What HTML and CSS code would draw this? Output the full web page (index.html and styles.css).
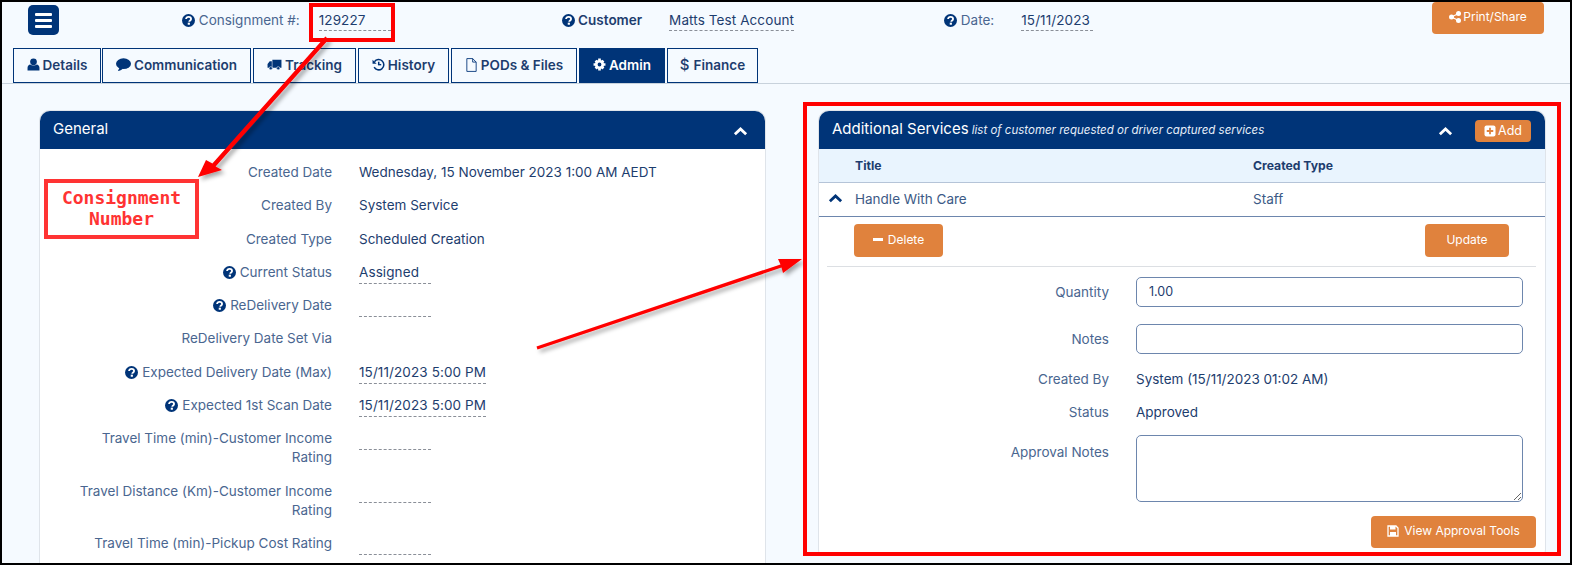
FILE: index.html
```html
<!DOCTYPE html>
<html lang="en">

<head>
    <title>Consignment 129227 - Admin</title>
    <meta charset="UTF-8">
    <meta name="viewport" content="width=device-width, initial-scale=1">

    <link rel="stylesheet" href="styles.css">
</head>

<body>
    <svg class="defs" width="0" height="0">
        <symbol id="i-help" viewBox="0 0 24 24">
            <circle cx="12" cy="12" r="12" fill="currentColor" />
            <path d="M7.500 9.200c.3-2.600 2.200-4 4.700-4 2.600 0 4.500 1.600 4.500 3.800 0 3-3.300 2.900-3.300 5.500" fill="none" stroke="#fff" stroke-width="3.400" />
            <rect x="10.600" y="16" width="4" height="3.800" fill="#fff" />
        </symbol>
        <symbol id="i-user" viewBox="0 0 24 24">
            <circle cx="12" cy="7" r="6.200" fill="currentColor" />
            <path d="M1 23v-5c0-3.500 2.500-6 5-6 1.500 1.300 3.500 2 6 2s4.500-.7 6-2c2.500 0 5 2.500 5 6v5z" fill="currentColor" />
        </symbol>
        <symbol id="i-comment" viewBox="0 0 28 24">
            <ellipse cx="14" cy="10.500" rx="14" ry="10" fill="currentColor" />
            <path d="M7 17l-3.500 7c3.500 0 7-1.500 9.500-4.500z" fill="currentColor" />
        </symbol>
        <symbol id="i-truck" viewBox="0 0 28 24">
            <path d="M10 3h17v15H10zM1 11l4-5h4v12H1z" fill="currentColor" />
            <circle cx="7" cy="19" r="3" fill="currentColor" stroke="#f5faff" />
            <circle cx="21" cy="19" r="3" fill="currentColor" stroke="#f5faff" />
        </symbol>
        <symbol id="i-history" viewBox="0 0 24 24">
            <path d="M4.500 7A9.500 9.500 0 1 1 4 17" fill="none" stroke="currentColor" stroke-width="2.800" />
            <path d="M1 3v7.500h7.500zM11 7h2.800v6H11z" fill="currentColor" />
            <path d="M11 11h6v2.600h-6z" fill="currentColor" />
        </symbol>
        <symbol id="i-file" viewBox="0 0 20 24">
            <path d="M2 1h10l6 6v16H2zM12 1v6h6" fill="none" stroke="currentColor" stroke-width="1.500" />
        </symbol>
        <symbol id="i-cog" viewBox="0 0 24 24">
            <path d="M12 3.500a8.500 8.500 0 1 0 0 17 8.500 8.500 0 0 0 0-17zm0 5a3.500 3.500 0 1 1 0 7 3.500 3.500 0 0 1 0-7z" fill="currentColor" fill-rule="evenodd" />
            <path d="M9.500 1h5v4h-5zM9.500 19h5v4h-5zM1 9.500h4v5H1zM19 9.500h4v5h-4zM3 6.500 6.500 3l3 3L6 9.500zM17.500 21 21 17.500l-3-3-3.500 3.500zM3 17.500 6.500 21l3-3L6 14.500zM21 6.500 17.500 3l-3 3L18 9.500z" fill="currentColor" />
        </symbol>
        <symbol id="i-up" viewBox="0 0 24 14">
            <path d="M3 11.500 12 3l9 8.500" fill="none" stroke="currentColor" stroke-width="4.500" />
        </symbol>
        <symbol id="i-share" viewBox="0 0 24 24">
            <circle cx="19" cy="5" r="5" fill="currentColor" />
            <circle cx="19" cy="19" r="5" fill="currentColor" />
            <circle cx="5" cy="12" r="5" fill="currentColor" />
            <path d="M5 12 19 5M5 12l14 7" stroke="currentColor" stroke-width="2.500" />
        </symbol>
        <symbol id="i-plus" viewBox="0 0 24 24">
            <rect x="1" y="1" width="22" height="22" rx="4" fill="currentColor" />
            <path d="M12 5.500v13M5.500 12h13" stroke="#e0823d" stroke-width="3.600" />
        </symbol>
        <symbol id="i-save" viewBox="0 0 24 24">
            <path d="M2 2h16l4 4v16H2z" fill="none" stroke="currentColor" stroke-width="2.600" />
            <path d="M6 2h11v7H6zM6 14h12v8H6z" fill="currentColor" />
        </symbol>
    </svg>

    <div class="frame">
        <div class="topbar">
            <button class="menu-btn">
                <span></span><span></span><span></span>
            </button>
            <div class="field field-consignment">
                <span class="field-label"><svg class="ico"><use href="#i-help" /></svg> Consignment #:</span>
                <span class="editable">129227</span>
            </div>
            <div class="field field-customer">
                <span class="field-label strong"><svg class="ico"><use href="#i-help" /></svg> Customer</span>
                <span class="editable">Matts Test Account</span>
            </div>
            <div class="field field-date">
                <span class="field-label"><svg class="ico"><use href="#i-help" /></svg> Date:</span>
                <span class="editable">15/11/2023</span>
            </div>
            <button class="btn btn-print"><svg class="ico"><use href="#i-share" /></svg>Print/Share</button>
        </div>

        <div class="tabs">
            <a class="tab tab-details"><svg class="ico"><use href="#i-user" /></svg>Details</a>
            <a class="tab tab-comm"><svg class="ico ico-wide"><use href="#i-comment" /></svg>Communication</a>
            <a class="tab tab-tracking"><svg class="ico ico-wide"><use href="#i-truck" /></svg>Tracking</a>
            <a class="tab tab-history"><svg class="ico"><use href="#i-history" /></svg>History</a>
            <a class="tab tab-pods"><svg class="ico ico-tall"><use href="#i-file" /></svg>PODs &amp; Files</a>
            <a class="tab tab-admin active"><svg class="ico"><use href="#i-cog" /></svg>Admin</a>
            <a class="tab tab-finance"><span class="dollar">$</span>Finance</a>
        </div>

        <div class="content">
            <section class="panel panel-general">
                <header class="panel-head">
                    <span class="panel-title">General</span>
                    <svg class="chevron"><use href="#i-up" /></svg>
                </header>
                <div class="details">
                    <div class="row"><div class="lbl">Created Date</div><div class="val">Wednesday, 15 November 2023 1:00 AM AEDT</div></div>
                    <div class="row"><div class="lbl">Created By</div><div class="val">System Service</div></div>
                    <div class="row"><div class="lbl">Created Type</div><div class="val">Scheduled Creation</div></div>
                    <div class="row"><div class="lbl"><svg class="ico"><use href="#i-help" /></svg> Current Status</div><div class="val"><span class="editable">Assigned</span></div></div>
                    <div class="row"><div class="lbl"><svg class="ico"><use href="#i-help" /></svg> ReDelivery Date</div><div class="val"><span class="editable"></span></div></div>
                    <div class="row"><div class="lbl">ReDelivery Date Set Via</div><div class="val"></div></div>
                    <div class="row"><div class="lbl"><svg class="ico"><use href="#i-help" /></svg> Expected Delivery Date (Max)</div><div class="val"><span class="editable">15/11/2023 5:00 PM</span></div></div>
                    <div class="row"><div class="lbl"><svg class="ico"><use href="#i-help" /></svg> Expected 1st Scan Date</div><div class="val"><span class="editable">15/11/2023 5:00 PM</span></div></div>
                    <div class="row"><div class="lbl">Travel Time (min)-Customer Income Rating</div><div class="val"><span class="editable"></span></div></div>
                    <div class="row"><div class="lbl">Travel Distance (Km)-Customer Income Rating</div><div class="val"><span class="editable"></span></div></div>
                    <div class="row"><div class="lbl">Travel Time (min)-Pickup Cost Rating</div><div class="val"><span class="editable"></span></div></div>
                </div>
            </section>

            <section class="panel panel-services">
                <header class="panel-head">
                    <span class="panel-title">Additional Services <em>list of customer requested or driver captured services</em></span>
                    <svg class="chevron"><use href="#i-up" /></svg>
                    <button class="btn btn-add"><svg class="ico"><use href="#i-plus" /></svg>Add</button>
                </header>
                <div class="svc-row svc-head">
                    <div></div>
                    <div>Title</div>
                    <div>Created Type</div>
                </div>
                <div class="svc-row svc-item">
                    <svg class="chevron chevron-dark"><use href="#i-up" /></svg>
                    <div>Handle With Care</div>
                    <div>Staff</div>
                </div>
                <div class="svc-actions">
                    <button class="btn btn-delete"><span class="minus"></span>Delete</button>
                    <button class="btn btn-update">Update</button>
                </div>
                <div class="svc-form">
                    <label class="lbl lbl-input">Quantity</label>
                    <input class="inp" type="text" value="1.00">
                    <label class="lbl lbl-input">Notes</label>
                    <input class="inp inp-last" type="text">
                    <div class="lbl lbl-plain">Created By</div>
                    <div class="val val-plain">System (15/11/2023 01:02 AM)</div>
                    <div class="lbl lbl-plain">Status</div>
                    <div class="val val-plain">Approved</div>
                    <label class="lbl lbl-area">Approval Notes</label>
                    <textarea class="inp inp-area"></textarea>
                </div>
                <div class="svc-foot">
                    <button class="btn btn-tools"><svg class="ico"><use href="#i-save" /></svg>View Approval Tools</button>
                </div>
            </section>
        </div>

        <!-- annotations drawn over the screenshot -->
        <svg class="arrows" viewBox="0 0 1568 561">
            <defs>
                <filter id="arrow-shadow" x="-20%" y="-20%" width="140%" height="140%">
                    <feDropShadow dx="3" dy="3" stdDeviation="2" flood-color="#000" flood-opacity=".35" />
                </filter>
            </defs>
            <g filter="url(#arrow-shadow)" fill="#f00">
                <path d="M323.400 34.500 326.600 37.500 213.600 164.500 220 168 196 175 204 158 210.400 161.500z" />
                <path d="M534.500 344.400 778.500 262.400 776 257 800 257 781 271 779.500 265.600 535.500 347.600z" />
            </g>
        </svg>
        <div class="mark mark-consignment"></div>
        <div class="mark mark-services"></div>
        <div class="callout">Consignment<br>Number</div>
    </div>
</body>

</html>
```

FILE: styles.css
```css
body {
    margin: 0;
    background-color: #000;
    font-family: "Inter", "Liberation Sans", sans-serif;
    font-size: 13.500px;
    color: #1d3d6e;
}

.defs {
    position: absolute;
}

.frame {
    position: relative;
    box-sizing: border-box;
    height: 565px;
    overflow: hidden;
    border: 2px solid #000;
    background-color: #f5faff;
}

.ico {
    width: 13px;
    height: 13px;
    vertical-align: -2px;
    color: #003478;
}

button {
    font-family: inherit;
    cursor: pointer;
}

/* top bar */
.topbar {
    display: flex;
    align-items: flex-start;
    height: 46px;
    padding-left: 26px;
    padding-right: 26px;
    box-sizing: border-box;
}

.menu-btn {
    display: flex;
    flex-direction: column;
    justify-content: center;
    gap: 3px;
    width: 31px;
    height: 30px;
    margin-top: 3px;
    padding: 0 7px;
    border: 0;
    border-radius: 5px;
    background-color: #003478;
}

.menu-btn span {
    height: 3px;
    border-radius: 1px;
    background-color: #fff;
}

.field {
    display: flex;
    align-items: flex-start;
    margin-top: 9px;
    line-height: 19px;
}

.field .editable {
    padding-bottom: 0;
}

.field-label {
    color: #4a6690;
}

.field-label.strong {
    color: #1d3d6e;
    font-weight: 600;
}

.field-consignment {
    margin-left: 123px;
    gap: 19px;
}

.field-customer {
    margin-left: 171px;
    gap: 27px;
}

.field-date {
    margin-left: 150px;
    gap: 27px;
}

.editable {
    display: block;
    width: fit-content;
    min-width: 72px;
    min-height: 19px;
    margin-bottom: -2px;
    padding-bottom: 1px;
    border-bottom: 1px dashed #8a8f98;
    letter-spacing: .1px;
}

.btn {
    border: 0;
    border-radius: 4px;
    padding: 0 0 2px;
    background-color: #e0823d;
    color: #fff;
    font-size: 12px;
}

.btn .ico {
    color: #fff;
}

.btn-print {
    width: 112px;
    height: 32px;
    margin-left: auto;
    padding-bottom: 4px;
}

.btn-print .ico {
    width: 12px;
    height: 12px;
    margin-right: 2px;
}

/* tabs */
.tabs {
    display: flex;
    gap: 2px;
    height: 36px;
    padding-left: 11px;
    box-sizing: border-box;
    border-bottom: 1px solid #c8d2dc;
}

.tab {
    display: flex;
    align-items: center;
    justify-content: center;
    gap: 3px;
    box-sizing: border-box;
    height: 35px;
    padding-bottom: 2px;
    border: 1px solid #003478;
    color: #1d3d6e;
    font-weight: 600;
    white-space: nowrap;
}

.tab-details {
    width: 88px;
}

.tab-comm {
    width: 149px;
    margin-left: -1px;
}

.tab-tracking {
    width: 103px;
}

.tab-history {
    width: 91px;
}

.tab-pods {
    width: 126px;
}

.tab-admin {
    width: 86px;
}

.tab-finance {
    width: 91px;
}

.tab .ico-wide {
    width: 15px;
}

.tab .ico-tall {
    height: 14px;
}

.tab.active {
    background-color: #003478;
    color: #fff;
}

.tab.active .ico {
    color: #fff;
}

.dollar {
    font-size: 15px;
    font-weight: 500;
    margin-right: 1px;
}

/* panels */
.content {
    display: grid;
    grid-template-columns: 725px 726px;
    gap: 54px;
    align-items: start;
    padding: 27px 0 0 38px;
}

.panel {
    background-color: #fff;
    border-radius: 10px 10px 5px 5px;
    box-shadow: 0 0 0 1px #dfe4ea;
}

.panel-general {
    padding-bottom: 40px;
}

.panel-head {
    display: flex;
    align-items: center;
    box-sizing: border-box;
    height: 38px;
    padding: 0 14px 0 13px;
    background-color: #003478;
    border-radius: 10px 10px 0 0;
    color: #fff;
}

.panel-title {
    flex: 1;
    padding-bottom: 3px;
    font-size: 15px;
}

.panel-title em {
    margin-left: -1px;
    font-size: 11.500px;
    color: #e6eef8;
}

.chevron {
    width: 15px;
    height: 9px;
    margin-top: 3px;
    margin-right: 3px;
    color: #fff;
}

.chevron-dark {
    color: #003478;
    margin: 0 0 0 9px;
}

.details {
    padding-top: 14px;
}

.row {
    display: grid;
    grid-template-columns: 260px 1fr;
    gap: 27px;
    padding-left: 32px;
    line-height: 19px;
    margin-bottom: 14.300px;
}

.lbl {
    text-align: right;
    color: #4a6690;
}

.val {
    color: #1d3d6e;
}

/* additional services */
.btn-add {
    width: 56px;
    height: 22px;
    margin-top: 2px;
    margin-left: 19px;
    font-size: 12.500px;
}

.btn-add .ico {
    width: 12px;
    height: 12px;
    margin-right: 2px;
}

.svc-row {
    display: grid;
    grid-template-columns: 36px 398px 1fr;
    align-items: center;
}

.svc-head {
    height: 34px;
    box-sizing: border-box;
    background-color: #e9f4fe;
    border-bottom: 1px solid #b5c4d8;
    font-size: 12.200px;
    font-weight: 700;
}

.svc-item {
    height: 34px;
    box-sizing: border-box;
    padding-bottom: 2px;
    border-bottom: 1px solid #6d86ad;
    color: #3c5a86;
}

.svc-actions {
    display: flex;
    justify-content: space-between;
    margin: 7px 9px 0 8px;
    padding: 0 27px 9px 27px;
    border-bottom: 1px solid #dcdfe3;
}

.btn-delete {
    width: 89px;
    height: 33px;
}

.minus {
    display: inline-block;
    width: 10px;
    height: 3px;
    margin-right: 5px;
    vertical-align: 3px;
    background-color: #fff;
}

.btn-update {
    width: 84px;
    height: 33px;
}

.svc-form {
    display: grid;
    grid-template-columns: 290px 387px;
    column-gap: 27px;
    padding-top: 10px;
    align-items: start;
    line-height: 19px;
}

.lbl-input {
    padding-top: 6px;
}

.inp {
    box-sizing: border-box;
    width: 100%;
    height: 30px;
    margin-bottom: 17px;
    padding: 0 12px 1px;
    border: 1px solid #6d86ad;
    border-radius: 5px;
    background-color: #fff;
    color: #1d3d6e;
    font-family: inherit;
    font-size: 12.500px;
}

.inp-last {
    margin-bottom: 16px;
}

.inp-area {
    display: block;
    height: 67px;
    margin-bottom: 0;
    margin-top: -1px;
}

.lbl-plain,
.val-plain {
    margin-bottom: 14px;
}

.lbl-area {
    padding-top: 7px;
}

.svc-foot {
    display: flex;
    justify-content: flex-end;
    padding: 14px 9px 7px 0;
}

.btn-tools {
    width: 165px;
    height: 32px;
    padding-bottom: 4px;
}

.btn-tools .ico {
    width: 12px;
    height: 12px;
    margin-right: 5px;
}

/* annotations */
.arrows {
    position: absolute;
    left: 0;
    top: 0;
    width: 1568px;
    height: 561px;
    pointer-events: none;
}

.mark {
    position: absolute;
    box-sizing: border-box;
    border: 4px solid #f00;
}

.mark-consignment {
    left: 307px;
    top: 1px;
    width: 86px;
    height: 39px;
}

.mark-services {
    left: 801px;
    top: 100px;
    width: 758px;
    height: 454px;
}

.callout {
    position: absolute;
    left: 42px;
    top: 177px;
    box-sizing: border-box;
    width: 155px;
    height: 60px;
    padding-top: 4px;
    border: 4px solid #ff3333;
    background-color: #fff;
    color: #ff3333;
    font-family: "DejaVu Sans Mono", monospace;
    font-size: 18px;
    font-weight: 700;
    line-height: 21px;
    text-align: center;
}
```
